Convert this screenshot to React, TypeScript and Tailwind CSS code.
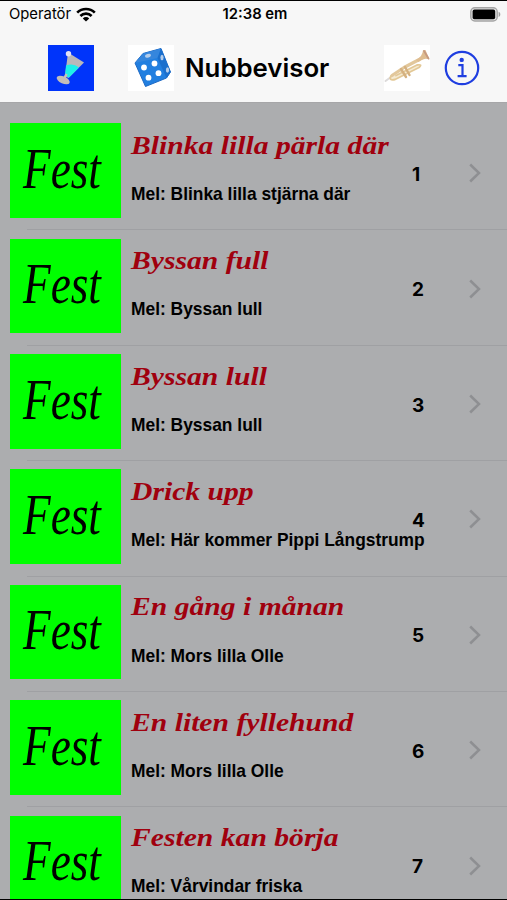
const songs = [
  { title: "Blinka lilla pärla där", melody: "Blinka lilla stjärna där" },
  { title: "Byssan full", melody: "Byssan lull" },
  { title: "Byssan lull", melody: "Byssan lull" },
  { title: "Drick upp", melody: "Här kommer Pippi Långstrump" },
  { title: "En gång i månan", melody: "Mors lilla Olle" },
  { title: "En liten fyllehund", melody: "Mors lilla Olle" },
  { title: "Festen kan börja", melody: "Vårvindar friska" },
];

function WifiIcon() {
  return (
    <svg width="20" height="15" viewBox="0 0 20 15" fill="none" stroke="#000" strokeWidth="2.7">
      <path d="M1.2 5.6a12.6 12.6 0 0 1 17.6 0" />
      <path d="M4.4 9a8 8 0 0 1 11.2 0" />
      <path d="M6.8 11.4a4.6 4.6 0 0 1 6.4 0L10 14.6z" fill="#000" stroke="none" />
    </svg>
  );
}

function BatteryIcon() {
  return (
    <svg width="31" height="15" viewBox="0 0 31 15">
      <rect x="0.8" y="0.8" width="26.4" height="13.2" rx="4" fill="#e4e4e4" stroke="#a5a5a5" strokeWidth="1.4" />
      <rect x="2.6" y="2.6" width="22.6" height="9.6" rx="1.8" fill="#000" />
      <path d="M28.6 4.8c2.3.8 2.3 4.4 0 5.2z" fill="#a0a0a0" />
    </svg>
  );
}

function GlassIcon() {
  return (
    <svg width="46" height="46" viewBox="0 0 46 46">
      <rect width="46" height="46" fill="#0034fa" />
      <path d="M20 7.5 36 17.5 20.5 33 17 31z" fill="#b9b8ba" />
      <path d="M18 20.5Q25 17.5 31 22.5L21 32.5 17 30.5z" fill="#1cf0ea" />
      <path d="M18.5 29 15.5 35" stroke="#c6c1bd" strokeWidth="2.5" />
      <ellipse cx="15.2" cy="35" rx="7" ry="3.5" transform="rotate(25 15.2 35)" fill="#c3bdb9" />
      <circle cx="20.5" cy="8.8" r="2.7" fill="#e3e2f4" />
    </svg>
  );
}

function DiceIcon() {
  return (
    <svg width="46" height="46" viewBox="0 0 46 46">
      <rect width="46" height="46" fill="#fff" />
      <path d="M7 18 15 8.5 33 3.5 42.5 27 38.5 33 17.5 41.5z" fill="#217fe0" stroke="#1d69c4" strokeWidth="1" strokeLinejoin="round" />
      <path d="M7 18 15 8.5 33 3.5 29.5 13z" fill="#3586dd" />
      <path d="M29.5 13 33 3.5 42.5 27 38.5 33z" fill="#1a6fcd" />
      <ellipse cx="20" cy="10.8" rx="3" ry="1.8" transform="rotate(-18 20 10.8)" fill="#b5cdea" />
      <ellipse cx="34" cy="12.5" rx="1.6" ry="2.8" fill="#b5cdea" />
      <ellipse cx="39.5" cy="25" rx="1.6" ry="2.8" fill="#b5cdea" />
      <circle cx="16" cy="22.5" r="2.9" fill="#fff" />
      <circle cx="26.5" cy="18.5" r="2.9" fill="#fff" />
      <circle cx="20.5" cy="32.7" r="2.9" fill="#fff" />
      <circle cx="30.5" cy="28.2" r="2.9" fill="#fff" />
    </svg>
  );
}

function TrumpetIcon() {
  return (
    <svg width="46" height="46" viewBox="0 0 46 46" fill="none" strokeLinecap="round" strokeLinejoin="round">
      <rect width="46" height="46" fill="#fff" />
      <path d="M1.5 36 7 32" stroke="#dcdada" strokeWidth="2" />
      <path d="M7 31Q4.5 36 11 34.5L35 22.5Q39 19 33 20L12 30.5" fill="#f5ead2" stroke="#e3c896" strokeWidth="1.8" />
      <path d="M8 30.5 20 22.5 40 12" stroke="#e2c79b" strokeWidth="3.2" />
      <path d="M17 24 22 32M21 22 25.5 30" stroke="#d5b180" strokeWidth="2.4" />
      <path d="M32 15Q38.5 11.5 39 5.2L41.5 5 45.5 14.5Q40 12 34.5 17z" fill="#dfbd91" />
      <path d="M40 6 44.5 13.5" stroke="#c79a80" strokeWidth="1.8" />
    </svg>
  );
}

function InfoIcon() {
  return (
    <svg width="36" height="36" viewBox="0 0 36 36" fill="none" stroke="#1f3ee0" strokeWidth="2.2">
      <circle cx="18" cy="18" r="16.2" />
      <circle cx="17.7" cy="9.9" r="2.2" fill="#1f3ee0" stroke="none" />
      <path d="M14.3 15.2h4.2v11M13.6 26.2h9" />
    </svg>
  );
}

function Chevron() {
  return (
    <svg width="12" height="20" viewBox="0 0 12 20" fill="none" stroke="#8e8f92" strokeWidth="2.5">
      <path d="M1.2 1.5 10 10 1.2 18.5" />
    </svg>
  );
}

function SongRow({ title, melody, number }: { title: string; melody: string; number: number }) {
  return (
    <div className="relative flex h-[115.4px] shrink-0 pt-[8.3px] pl-[10px]">
      <div className="h-[94.5px] w-[111px] shrink-0 bg-[#00ff00] pt-[13.5px] pl-[13px]">
        <div className="origin-left scale-x-[0.78] font-['Liberation_Serif',serif] text-[58px] leading-[64px] text-black italic">
          Fest
        </div>
      </div>
      <div className="w-[291px] shrink-0 pl-[10px] whitespace-nowrap">
        <h2 className="mt-[6.5px] w-max origin-left scale-x-[1.14] font-['Liberation_Serif',serif] text-[26px] leading-[32px] font-bold text-[#a0000e] italic">
          {title}
        </h2>
        <p className="mt-[21.3px] w-max origin-left scale-x-[0.983] text-[17.7px] leading-[22px] font-bold">
          Mel: {melody}
        </p>
      </div>
      <div className="mt-[39.5px] font-['Inter',sans-serif] text-[19px] leading-[24px] font-bold">{number}</div>
      <div className="mt-[40px] mr-[26px] ml-auto">
        <Chevron />
      </div>
      <div className="absolute right-0 bottom-0 left-[27px] h-px bg-[#9fa0a3]" />
    </div>
  );
}

export default function App() {
  return (
    <div className="flex h-[900px] w-[507px] flex-col overflow-hidden border-t-[1.5px] border-b border-black bg-[#acadaf] font-['Liberation_Sans',sans-serif] text-black">
      <header className="h-[102px] shrink-0 border-b border-[#a6a6a8] bg-[#f7f7f7] font-['Inter',sans-serif]">
        <div className="grid h-[26px] grid-cols-3 items-center pr-[6px] pl-[9px]">
          <div className="flex items-center gap-[5px] text-[14.8px]">
            Operatör
            <WifiIcon />
          </div>
          <div className="text-center text-[14.8px] font-semibold">12:38 em</div>
          <div className="flex justify-end">
            <BatteryIcon />
          </div>
        </div>
        <div className="flex items-center pt-[18px] pl-[48px]">
          <GlassIcon />
          <div className="ml-[34px]">
            <DiceIcon />
          </div>
          <h1 className="ml-[11px] w-[145px] text-[25.8px] font-semibold whitespace-nowrap">Nubbevisor</h1>
          <div className="ml-[54px]">
            <TrumpetIcon />
          </div>
          <div className="ml-[14px]">
            <InfoIcon />
          </div>
        </div>
      </header>
      <main className="flex flex-col overflow-hidden pt-[12px]">
        {songs.map((song, i) => (
          <SongRow key={song.title} title={song.title} melody={song.melody} number={i + 1} />
        ))}
      </main>
    </div>
  );
}
